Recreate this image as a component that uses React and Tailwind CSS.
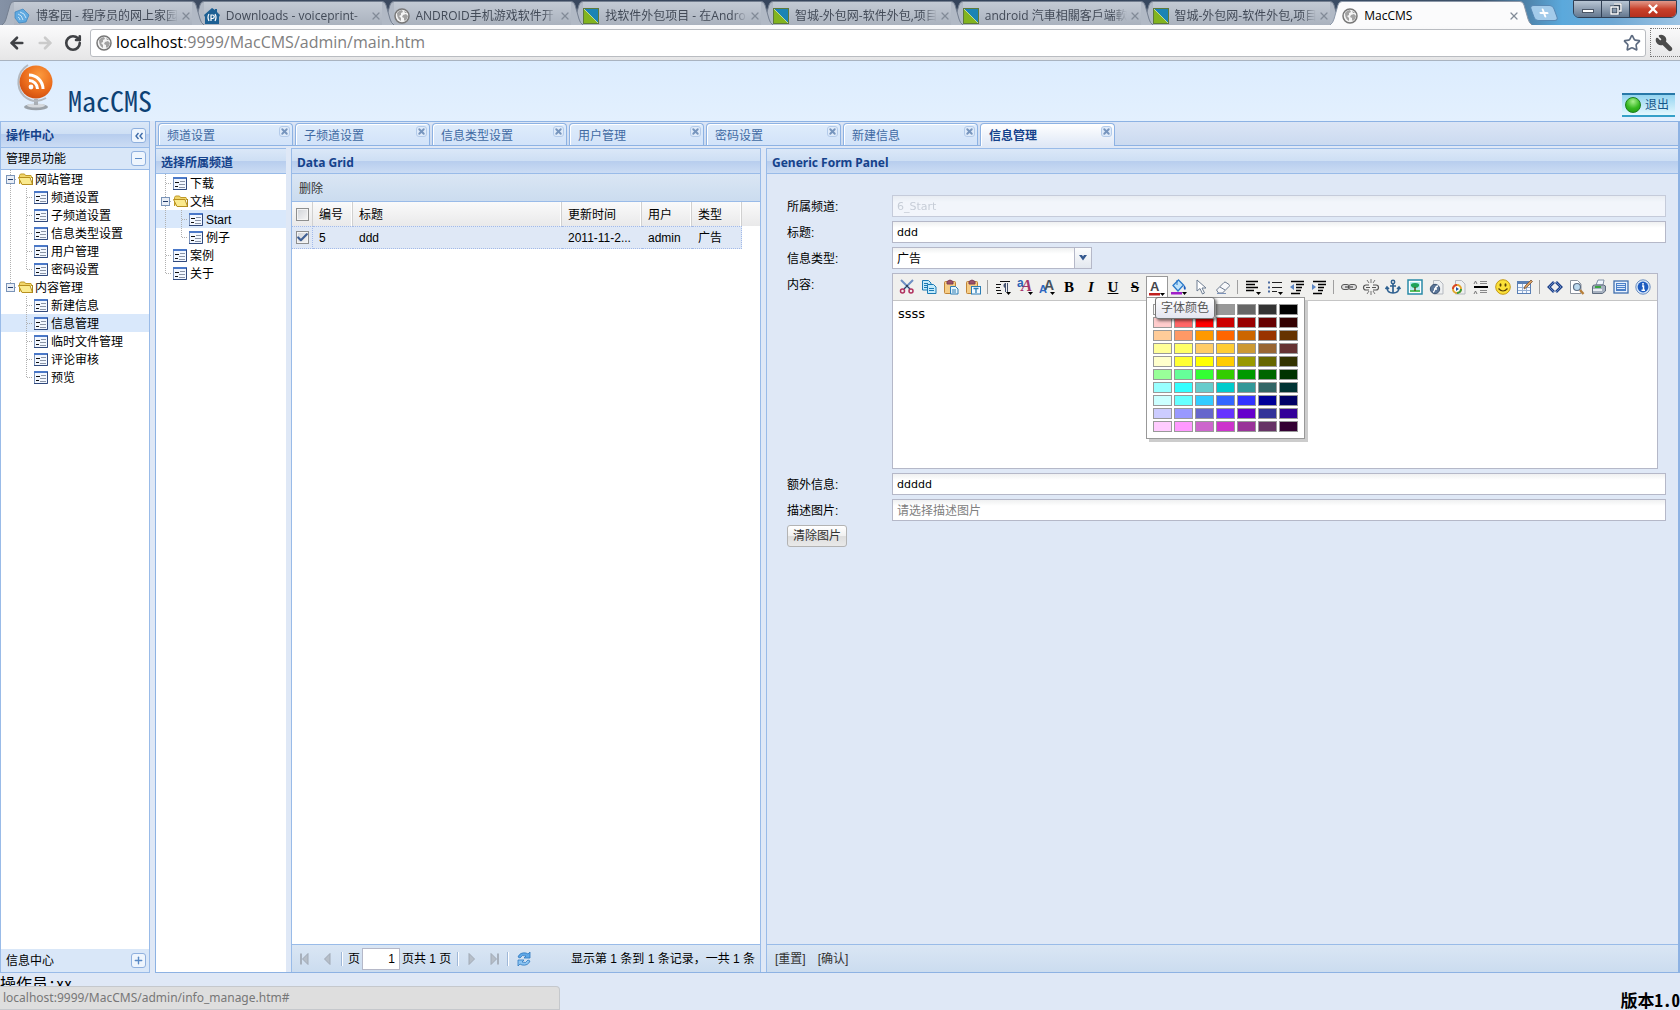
import React, { useState } from 'react';
import { ArrowLeft, ArrowRight, RotateCw, Star, Wrench, Check, X, Plus } from 'lucide-react';

const browserTabs = [
  { title: '博客园 - 程序员的网上家园', icon: 'cnblogs' },
  { title: 'Downloads - voiceprint-', icon: 'home' },
  { title: 'ANDROID手机游戏软件开', icon: 'globe' },
  { title: '找软件外包项目 - 在Andro', icon: 'zc' },
  { title: '智城-外包网-软件外包,项目', icon: 'zc' },
  { title: 'android 汽車相關客戶端軟', icon: 'zc' },
  { title: '智城-外包网-软件外包,项目', icon: 'zc' },
  { title: 'MacCMS', icon: 'globe', active: true },
];

const pageTabs = ['频道设置', '子频道设置', '信息类型设置', '用户管理', '密码设置', '新建信息', '信息管理'];

const adminTree = [
  { cells: ['minus'], icon: 'folder', text: '网站管理' },
  { cells: ['line', 'elbow'], text: '频道设置' },
  { cells: ['line', 'elbow'], text: '子频道设置' },
  { cells: ['line', 'elbow'], text: '信息类型设置' },
  { cells: ['line', 'elbow'], text: '用户管理' },
  { cells: ['line', 'end'], text: '密码设置' },
  { cells: ['minusEnd'], icon: 'folder', text: '内容管理' },
  { cells: ['blank', 'elbow'], text: '新建信息' },
  { cells: ['blank', 'elbow'], text: '信息管理' },
  { cells: ['blank', 'elbow'], text: '临时文件管理' },
  { cells: ['blank', 'elbow'], text: '评论审核' },
  { cells: ['blank', 'end'], text: '预览' },
];

const channelTree = [
  { cells: ['elbow'], text: '下载' },
  { cells: ['minus'], icon: 'folder', text: '文档' },
  { cells: ['line', 'elbow'], text: 'Start' },
  { cells: ['line', 'end'], text: '例子' },
  { cells: ['elbow'], text: '案例' },
  { cells: ['end'], text: '关于' },
];

const palette = [
  ['#ffffff', '#cccccc', '#c0c0c0', '#999999', '#666666', '#333333', '#000000'],
  ['#ffcccc', '#ff6666', '#ff0000', '#cc0000', '#990000', '#660000', '#330000'],
  ['#ffcc99', '#ff9966', '#ff9900', '#ff6600', '#cc6600', '#993300', '#663300'],
  ['#ffff99', '#ffff66', '#ffcc66', '#ffcc33', '#cc9933', '#996633', '#663333'],
  ['#ffffcc', '#ffff33', '#ffff00', '#ffcc00', '#999900', '#666600', '#333300'],
  ['#99ff99', '#66ff99', '#33ff33', '#33cc00', '#009900', '#006600', '#003300'],
  ['#99ffff', '#33ffff', '#66cccc', '#00cccc', '#339999', '#336666', '#003333'],
  ['#ccffff', '#66ffff', '#33ccff', '#3366ff', '#3333ff', '#000099', '#000066'],
  ['#ccccff', '#9999ff', '#6666cc', '#6633ff', '#6600cc', '#333399', '#330099'],
  ['#ffccff', '#ff99ff', '#cc66cc', '#cc33cc', '#993399', '#663366', '#330033'],
];

const Globe = () => (
  <svg viewBox="0 0 16 16" className="w-4 h-4 shrink-0">
    <circle cx="8" cy="8" r="7" fill="#f4f4f4" stroke="#777" strokeWidth="1.5" />
    <path d="M3 5q2-3 5-3l1 2-2 1 0 2-2 1 2 2 0 3q-4-2-4-8zM9 7l3-1 2 2-1 3-2 2-1-1 0-2-2-1zM10 3l2 1 1 1-2 0z" fill="#a2a2a2" />
  </svg>
);

const Favicon = ({ name }) => {
  if (name === 'globe') return <Globe />;
  if (name === 'zc') {
    return (
      <svg viewBox="0 0 16 16" className="w-4 h-4 shrink-0">
        <rect width="16" height="16" fill="#5d7a3a" />
        <path d="M1 1h14v14z" fill="#1b84b4" />
        <path d="M1 1v14h14z" fill="#82b41e" />
        <path d="M1 1l14 14" stroke="#d8e8b0" strokeWidth="0.8" />
      </svg>
    );
  }
  if (name === 'home') {
    return (
      <svg viewBox="0 0 16 16" className="w-4 h-4 shrink-0">
        <path d="M8 0l3 2V1h2v3l3 3-1 2v7H1V9L0 7z" fill="#1c5f93" />
        <path d="M5 6Q3 9 5 13M11 6Q13 9 11 13M7 13V7h1.500a1.500 1.500 0 0 1 0 3.500H7" stroke="#fff" fill="none" strokeWidth="1.200" />
      </svg>
    );
  }
  return (
    <svg viewBox="0 0 16 16" className="w-4 h-4 shrink-0">
      <path d="M1 4l8-3 6 6-3 7-7 1-4-5z" fill="#5fa9e0" stroke="#3a82bd" strokeWidth="0.7" />
      <path d="M4 6q4 1 5 6M6 4q5 1 6 6M4 9q2 1 2 3" stroke="#c9e4f8" fill="none" strokeWidth="1" />
    </svg>
  );
};

const BrowserTab = ({ tab, z }) => {
  const fill = tab.active ? '#fbfbfc' : '#b1b9c5';
  const line = tab.active ? '#8b97a8' : '#747f90';
  return (
    <div className="relative flex flex-1 min-w-0 h-6 -mr-3 last:mr-0" style={{ zIndex: z }}>
      <svg viewBox="0 0 12 24" className="w-3 h-6 shrink-0">
        <path d="M0 24Q3 22 4 18L8 4Q9 0.500 12 0.500V24z" fill={fill} />
        <path d="M0 24Q3 22 4 18L8 4Q9 0.500 12 0.500" fill="none" stroke={line} />
      </svg>
      <div className={`flex flex-1 min-w-0 items-center pt-1 border-t ${tab.active ? 'bg-[#fbfbfc] border-[#8b97a8]' : 'bg-linear-to-b from-[#c3cad4] to-[#aab2be] border-[#747f90]'}`}>
        <Favicon name={tab.icon} />
        <span className={`flex-1 min-w-0 ml-1.5 overflow-hidden whitespace-nowrap text-xs ${tab.active ? 'text-black' : 'text-[#424a57] mask-r-from-90%'}`}>{tab.title}</span>
        <button aria-label="关闭" className="ml-0.5 text-[#828b98]">
          <X className="w-3 h-3" strokeWidth={2.5} />
        </button>
      </div>
      <svg viewBox="0 0 12 24" className="w-3 h-6 shrink-0">
        <path d="M12 24Q9 22 8 18L4 4Q3 0.500 0 0.500V24z" fill={fill} />
        <path d="M12 24Q9 22 8 18L4 4Q3 0.500 0 0.500" fill="none" stroke={line} />
      </svg>
    </div>
  );
};

const treeLines = {
  line: 'M8.500 0V18',
  elbow: 'M8.500 0V18M9 9.500H15',
  end: 'M8.500 0V9M9 9.500H15',
  minus: 'M8.500 0V18M9 9.500H15',
  minusEnd: 'M8.500 0V9M9 9.500H15',
};

const TreeCell = ({ type }) => (
  <svg viewBox="0 0 16 18" className="w-4 h-[18px] shrink-0">
    {treeLines[type] && <path d={treeLines[type]} stroke="#b0b0b0" strokeDasharray="1 1" fill="none" />}
    {type.startsWith('minus') && (
      <>
        <rect x="4.500" y="5.500" width="8" height="8" fill="#e9eef6" stroke="#7a94b8" />
        <path d="M6 9.500h5" stroke="#203a68" />
      </>
    )}
  </svg>
);

const FolderIcon = () => (
  <svg viewBox="0 0 16 16" className="w-4 h-4 shrink-0">
    <path d="M1.500 13V4.500l1-1.500h4l1 1.500h5.500l.5 1V7" fill="#f0d56a" stroke="#c09a28" />
    <path d="M0.500 6.500h11.500l2.500 7H4z" fill="#faea8e" stroke="#b8901f" strokeLinejoin="round" />
    <path d="M14.500 6v8" stroke="#a8861c" />
  </svg>
);

const LeafIcon = () => (
  <svg viewBox="0 0 16 16" className="w-4 h-4 shrink-0">
    <path d="M0.500 2.500h13v12h-13z" fill="#f2f7ff" stroke="#7c93ba" />
    <path d="M0 3h14" stroke="#4a78c8" strokeWidth="2" />
    <path d="M13.500 3v11.500H0" stroke="#30497c" fill="none" />
    <path d="M2 7.500h4M2 11.500h3" stroke="#101010" />
    <path d="M7 6.500h5M6 9.500h6M6 12.500h6" stroke="#8a94a6" />
  </svg>
);

const Tree = ({ items, initial }) => {
  const [selected, setSelected] = useState(initial);
  return (
    <ul className="flex-1 bg-white text-xs">
      {items.map((item) => (
        <li
          key={item.text}
          onClick={() => setSelected(item.text)}
          className={`flex items-center h-[18px] pl-px whitespace-nowrap cursor-pointer ${selected === item.text ? 'bg-[#d9e8fb]' : ''}`}
        >
          {item.cells.map((cell, i) => <TreeCell key={i} type={cell} />)}
          {item.icon === 'folder' ? <FolderIcon /> : <LeafIcon />}
          <a href="#" className="pt-0.5 pl-px leading-4">{item.text}</a>
        </li>
      ))}
    </ul>
  );
};

const PanelTitle = ({ children }) => (
  <h2 className="flex items-center justify-between shrink-0 h-[25px] pt-[3px] px-[5px] border-b border-[#99bbe8] bg-[linear-gradient(#dbe8f8,#cedff4_48%,#b7cdee_50%,#cbdcf4)] text-xs font-bold text-[#15428b]">
    {children}
  </h2>
);

const ToolButton = ({ label, children }) => (
  <button type="button" aria-label={label} className="flex items-center justify-center w-[15px] h-[15px] border border-[#8fb0de] rounded-[3px] bg-[#eef5fd] text-[#3f6ca8]">
    {children}
  </button>
);

const Separator = () => <span className="w-px h-3.5 bg-[#9fb8d8] border-r border-white box-content" />;

const Svg = ({ children }) => <svg viewBox="0 0 16 16" className="w-4 h-4 overflow-visible">{children}</svg>;
const dropArrow = <path d="M11 13h5l-2.500 3z" fill="#000" />;
const serif = 'Liberation Serif, serif';

const editorTools = [
  ['剪切', <Svg><path d="M2 1l9 9M14 1L5 10" stroke="#6f8fc4" strokeWidth="2" /><path d="M7 6l4 4M9 6l-4 4" stroke="#345" /><circle cx="3.500" cy="12" r="2" fill="none" stroke="#b0305e" strokeWidth="1.500" /><circle cx="12" cy="12" r="2" fill="none" stroke="#b0305e" strokeWidth="1.500" /></Svg>],
  ['复制', <Svg><path d="M1.500 1.500h6l2.500 2.500v7h-8.500z" fill="#c4ebfb" stroke="#1c7bb4" /><path d="M3 4.500h4M3 6.500h4M3 8.500h3" stroke="#1c7bb4" /><path d="M6.500 5.500h6l2.500 2.500v6.500H6.500z" fill="#c4ebfb" stroke="#1c7bb4" /><path d="M8 9.500h5M8 11.500h5" stroke="#1c7bb4" /></Svg>],
  ['粘贴', <Svg><rect x="1.500" y="2.500" width="11" height="12" rx="1" fill="#f6cd86" stroke="#c08437" /><path d="M4 5V2.500q3-3 6 0V5z" fill="#9c5069" stroke="#7c3d55" /><path d="M7.500 7.500h5l2.500 2.500v5H7.500z" fill="#e4f5fd" stroke="#2c7db4" /><path d="M9 11h4M9 13h4" stroke="#2c7db4" /></Svg>],
  ['粘贴文本', <Svg><rect x="1.500" y="2.500" width="11" height="12" rx="1" fill="#f6cd86" stroke="#c08437" /><path d="M4 5V2.500q3-3 6 0V5z" fill="#9c5069" stroke="#7c3d55" /><rect x="6.500" y="7.500" width="9" height="7.500" fill="#f2faff" stroke="#2c7db4" /><path d="M8.500 9.500h5M11 9.500V14" stroke="#2c7db4" strokeWidth="1.300" /></Svg>],
  null,
  ['段落标签', <Svg><path d="M5 2.500h10M1 5.500h5M1 8.500h4M1 11.500h5M2 14.500h5" stroke="#111" /><path d="M12.500 4v9M10.500 4v9" stroke="#44516e" /><path d="M11 4a2.500 2.500 0 0 0 0 5z" fill="#44516e" />{dropArrow}</Svg>],
  ['字体', <Svg><text x="0" y="8" fontSize="12" fontWeight="bold" fill="#2c62b4" fontFamily="Liberation Sans, sans-serif">a</text><text x="4" y="12" fontSize="17" fontStyle="italic" fontWeight="bold" fill="#a3356a" fontFamily={serif}>A</text>{dropArrow}</Svg>],
  ['字体大小', <Svg><text x="5" y="11" fontSize="14" fontWeight="bold" fill="#46525f" fontFamily="Liberation Sans, sans-serif">A</text><text x="0" y="14" fontSize="11" fontWeight="bold" fill="#2c67c0" fontFamily="Liberation Sans, sans-serif">A</text>{dropArrow}</Svg>],
  ['加粗', <span className="font-bold">B</span>],
  ['斜体', <span className="font-bold italic">I</span>],
  ['下划线', <span className="font-bold underline">U</span>],
  ['删除线', <span className="font-bold line-through">S</span>],
  'color',
  ['背景颜色', <Svg><path d="M2 6.500L7.500 1l5 5-5.500 6z" fill="#bfe3fb" stroke="#2b79c9" strokeWidth="1.300" /><path d="M6 1v5" stroke="#2b79c9" /><path d="M13 6q3 3 1 5-2-1-1-5z" fill="#1c5fc0" /><rect x="0" y="13" width="11" height="2.500" fill="#a020c8" />{dropArrow}</Svg>],
  ['全选', <Svg><path d="M4 1v11l3-2.500L9.500 15l2-1L9 9h4z" fill="#fff" stroke="#6d7d92" /></Svg>],
  ['删除文字格式', <Svg><path d="M1.500 11L9 3.500q1-1 2 0l3 2q1 1 0 2L7.500 14h-4z" fill="#f7f8fa" stroke="#6d7b90" /><path d="M5 8l5 3" stroke="#6d7b90" /><path d="M2 14.500h9" stroke="#7d93b8" /></Svg>],
  null,
  ['对齐', <Svg><path d="M1 2.500h12M1 5.500h9M1 8.500h12M1 11.500h8" stroke="#000" strokeWidth="1.400" />{dropArrow}</Svg>],
  ['列表', <Svg><path d="M5 3.500h10M5 8.500h10M5 12.500h5" stroke="#222" /><path d="M1 3.500h2M1 8.500h2M1 12.500h2" stroke="#4a6aa0" strokeWidth="2" />{dropArrow}</Svg>],
  ['减少缩进', <Svg><path d="M2 2.500h13M7 5.500h8M7 8.500h6M7 11.500h5M2 14.500h9" stroke="#000" strokeWidth="1.400" /><path d="M5 5v6l-4-3z" fill="#5c86c4" /></Svg>],
  ['增加缩进', <Svg><path d="M2 2.500h13M7 5.500h8M7 8.500h6M7 11.500h5M2 14.500h9" stroke="#000" strokeWidth="1.400" /><path d="M1 5v6l4-3z" fill="#5c86c4" /></Svg>],
  null,
  ['超链接', <Svg><rect x="0.500" y="5.500" width="8" height="5" rx="2.500" fill="#ddd" stroke="#555" /><rect x="7.500" y="5.500" width="8" height="5" rx="2.500" fill="#ddd" stroke="#555" /><path d="M4 8h8" stroke="#333" /></Svg>],
  ['取消超链接', <Svg><path d="M6 6H3a2.500 2.500 0 0 0 0 5h3M10 6h3a2.500 2.500 0 0 1 0 5h-3M3 8.500h4M9 8.500h4" fill="none" stroke="#555" strokeWidth="1.200" /><path d="M8 0v4M4 1l2 3M12 1l-2 3M8 12v4M4 15l2-3M12 15l-2-3" stroke="#777" /></Svg>],
  ['锚点', <Svg><circle cx="8" cy="3" r="1.700" fill="none" stroke="#2f6190" strokeWidth="1.500" /><path d="M8 5v9M5 7h6" stroke="#2f6190" strokeWidth="1.700" /><path d="M2 8.500q0 5.500 6 5.500t6-5.500M.5 10L2 8l2 2M12 10l2-2 1.500 2" fill="none" stroke="#2f6190" strokeWidth="1.500" /></Svg>],
  ['图片', <Svg><rect x="1" y="1" width="14" height="14" fill="#fff" stroke="#2a8aa8" strokeWidth="1.500" /><rect x="3" y="3" width="10" height="10" fill="#b7ecf4" /><path d="M3 11h10v2H3z" fill="#55c060" /><path d="M4 7q-1-3 4-3t4 3q-1 2-4 2t-4-2z" fill="#1ea35a" /><path d="M8 8v4" stroke="#5a4a20" strokeWidth="1.500" /></Svg>],
  ['Flash动画', <Svg><path d="M4.500 1.500h6L14 5v10H4.500z" fill="#eef0f2" stroke="#b5b9bf" /><circle cx="6" cy="10" r="4.700" fill="#5a7598" stroke="#3b5270" /><path d="M4 13q1 0 2-3t3-3M5 10h3" stroke="#fff" fill="none" strokeWidth="1.300" /></Svg>],
  ['多媒体', <Svg><path d="M4.500 1.500h6L14 5v10H4.500z" fill="#eef0f2" stroke="#b5b9bf" /><circle cx="6" cy="10" r="4" fill="#fff" stroke="#e2a52c" strokeWidth="2" /><path d="M2 10a4 4 0 0 1 4-4" stroke="#d8432c" strokeWidth="2" fill="none" /><path d="M10 10a4 4 0 0 1-4 4" stroke="#3a9c3c" strokeWidth="2" fill="none" /><path d="M5 8v4l3-2z" fill="#2355a4" /></Svg>],
  ['分页符', <Svg><path d="M1 8h14" stroke="#000" strokeWidth="2" /><path d="M7 2.500h7M7 4.500h7M7 11.500h7M7 13.500h7" stroke="#888" /><path d="M1 5l1.500-3L4 5M1 15l1.500-3L4 15" stroke="#777" fill="none" /></Svg>],
  ['表情', <Svg><circle cx="8" cy="8" r="7.300" fill="#fbe038" stroke="#c49a14" /><ellipse cx="5.500" cy="6" rx="1" ry="1.700" fill="#5a4106" /><ellipse cx="10.500" cy="6" rx="1" ry="1.700" fill="#5a4106" /><path d="M3.500 9.500q4.500 5 9 0" fill="none" stroke="#5a4106" strokeWidth="1.200" /></Svg>],
  ['表格', <Svg><rect x="0.500" y="2.500" width="13" height="12" fill="#f5f9ff" stroke="#5a7fb4" /><path d="M1 4h12" stroke="#5a7fb4" strokeWidth="2" /><path d="M1 8.500h12M1 11.500h12M5.500 5v9M9.500 5v9" stroke="#94aed2" /><path d="M7 10l1-3 6-6 1.500 1.500-6 6z" fill="#d9a066" stroke="#7b5534" strokeWidth="0.800" /></Svg>],
  null,
  ['源代码', <Svg><path d="M7 3L2 8l5 5M9 3l5 5-5 5" fill="none" stroke="#1d3f86" strokeWidth="2.800" /><path d="M7 3L2 8l5 5M9 3l5 5-5 5" fill="none" stroke="#7fa3dc" strokeWidth="0.700" /></Svg>],
  ['预览', <Svg><path d="M1.500 1.500h7L12 5v9.500H1.500z" fill="#fff" stroke="#8d949e" /><circle cx="8" cy="8" r="3.500" fill="#bcd9ee" stroke="#5d6f85" strokeWidth="1.200" /><path d="M11 11l3.500 4" stroke="#b77f3a" strokeWidth="2.400" /></Svg>],
  ['打印', <Svg><path d="M5 6l2-5h6l-1 5z" fill="#f1f7ff" stroke="#8191a5" /><path d="M1.500 8q0-2 2-2h9l2 1v5l-3 2.500H1.500z" fill="#a6b1bf" stroke="#5e6c7e" /><path d="M2 11h9" stroke="#e8edf3" strokeWidth="2" /><path d="M4 8h6" stroke="#3aa63f" strokeWidth="2" /></Svg>],
  ['全屏编辑', <Svg><rect x="1" y="2" width="14" height="12" fill="#e7f1fd" stroke="#3f6fae" strokeWidth="1.300" /><rect x="3" y="4" width="10" height="8" fill="#4b80c8" /><path d="M4 5.500h8M4 7.500h8M4 9.500h8" stroke="#dbe9fa" /></Svg>],
  ['关于', <Svg><circle cx="8" cy="8" r="7.200" fill="#d7e6f8" stroke="#6c8fc0" /><circle cx="8" cy="8" r="5.400" fill="#1d5cc0" /><path d="M8 4v1.800M7 7h1.500v4M6.500 11.200h3.500" stroke="#fff" strokeWidth="1.500" fill="none" /></Svg>],
];

const ColorPicker = () => (
  <div className="relative z-10 w-[22px] h-[22px]">
    <button type="button" aria-label="字体颜色" className="flex items-center justify-center w-[22px] h-[22px] bg-white border border-b-0 border-[#999999]">
      <Svg>
        <text x="1" y="11" fontSize="13" fontWeight="bold" fill="#46464c" fontFamily="Liberation Sans, sans-serif">A</text>
        <rect x="0" y="13" width="11" height="2.500" fill="#c02020" />
        {dropArrow}
      </Svg>
    </button>
    <div className="absolute left-0 top-[21px] w-[159px] border border-[#999999] bg-white px-1.5 py-1.5 shadow-[3px_3px_0_#cccccc]">
      <div className="grid grid-cols-7 gap-0.5">
        {palette.flat().map((color) => (
          <button key={color} type="button" aria-label={color} className="h-[11px] border border-[#999999]" style={{ backgroundColor: color }} />
        ))}
      </div>
    </div>
    <div role="tooltip" className="absolute left-[9px] top-[21px] h-[22px] px-[5px] border border-[#767676] rounded-[3px] bg-linear-to-b from-white to-[#e4e5f0] text-xs leading-[21px] text-[#575757] whitespace-nowrap shadow-[2px_2px_3px_#00000080]">
      字体颜色
    </div>
  </div>
);

const inputClass = 'h-[22px] border border-[#b5b8c8] bg-linear-to-b from-[#eff0f1] to-white to-30% px-1 outline-none';
const latinInput = 'flex-1 text-[11px] font-["DejaVu_Sans","Noto_Sans_CJK_SC",sans-serif]';

const Field = ({ label, id, children }) => (
  <div className="flex items-start mb-1">
    <label htmlFor={id} className="w-[105px] shrink-0 pt-0.5 leading-5">{label}:</label>
    {children}
  </div>
);

const CheckBox = ({ label, checked }) => (
  <label className="relative flex w-[13px] h-[13px]">
    <input type="checkbox" aria-label={label} defaultChecked={checked} className="peer appearance-none w-[13px] h-[13px] border border-[#8e8f8f] bg-linear-to-br from-[#d0d3d8] to-[#f6f6f6] shadow-[inset_0_0_0_1px_#f4f4f4]" />
    <Check className="absolute inset-0 w-[13px] h-[13px] text-[#3f5f94] hidden peer-checked:block" strokeWidth={4} />
  </label>
);

const PageArrow = ({ label, flip, bar }) => (
  <button type="button" aria-label={label} className="flex items-center justify-center w-[22px] h-[22px]">
    <svg viewBox="0 0 16 16" className={`w-4 h-4 ${flip ? 'rotate-180' : ''}`}>
      {bar && <path d="M4 2.500v11" stroke="#a7b0bc" strokeWidth="2" />}
      <path d="M11 2.500v11L5.500 8z" fill="#b6bec8" stroke="#a1aab6" />
    </svg>
  </button>
);

const headCell = 'pt-0.5 pl-[6px] text-left font-normal border-r border-[#d0d0d0] shadow-[inset_-1px_0_0_#ffffff]';
const bodyCell = 'pl-[6px] border-y border-dotted border-[#a3bae9] bg-[#dfe8f6] overflow-hidden whitespace-nowrap';

const Browser = () => (
  <>
    <div className="flex shrink-0 h-[25px] pt-px pl-0.5 bg-[linear-gradient(90deg,#8592a6,#3c4a60_12%,#34435a_60%,#3d5068_88%,#5ba9dc_93%,#6fa8d4_96%,#9dc4e4)]">
      <div className="relative flex flex-1 min-w-0">
        {browserTabs.map((tab, i) => <BrowserTab key={i} tab={tab} z={tab.active ? 20 : 10 - i} />)}
      </div>
      <div className="flex items-start justify-between w-[148px] pr-[3px]">
        <button aria-label="新标签页" className="mt-1 w-6 h-4 skew-x-[20deg] flex items-center justify-center rounded-sm border border-[#5788b4] bg-[#a3cbea]">
          <Plus className="w-3 h-3 text-white" strokeWidth={4} />
        </button>
        <div className="flex h-[18px] -mt-px border border-[#303f54] rounded-b-md overflow-hidden">
          <button aria-label="最小化" className="w-7 flex items-center justify-center bg-linear-to-b from-[#b9c6d4] to-[#65788f] border-r border-[#303f54]">
            <span className="w-3 h-1 mt-1 bg-white border border-[#4b5666]" />
          </button>
          <button aria-label="还原" className="w-7 flex items-center justify-center bg-linear-to-b from-[#b9c6d4] to-[#65788f] border-r border-[#303f54]">
            <svg viewBox="0 0 12 12" className="w-3 h-3"><path d="M4 1h7v7H9M1 4h7v7H1z" fill="none" stroke="#384656" strokeWidth="3" /><path d="M4 1h7v7H9M1 4h7v7H1z" fill="none" stroke="#fff" strokeWidth="1.500" /></svg>
          </button>
          <button aria-label="关闭窗口" className="w-[46px] flex items-center justify-center bg-linear-to-b from-[#e0988a] via-[#c8402a] to-[#b5301f]">
            <X className="w-3.5 h-3.5 text-white" strokeWidth={4} />
          </button>
        </div>
      </div>
    </div>
    <div className="flex items-center shrink-0 h-9 pl-2 border-b border-[#a9b3c0] bg-linear-to-b from-[#fbfbfc] to-[#e6e6e7]">
      <button aria-label="后退"><ArrowLeft className="w-[18px] h-[18px] text-[#3f4145]" strokeWidth={3.5} /></button>
      <button aria-label="前进" className="ml-2.5"><ArrowRight className="w-[18px] h-[18px] text-[#cbcbcb]" strokeWidth={3.5} /></button>
      <button aria-label="刷新" className="ml-2.5"><RotateCw className="w-[18px] h-[18px] text-[#3f4145]" strokeWidth={3.5} /></button>
      <div className="flex flex-1 items-center h-7 ml-2 pl-[5px] pr-1 bg-white border border-[#b9bcc1] rounded-[3px]">
        <Globe />
        <a href="#" className="flex-1 ml-1 pb-px text-[16px] leading-6 text-[#808080]"><span className="text-black">localhost</span>:9999/MacCMS/admin/main.htm</a>
        <Star className="w-[18px] h-[18px] text-[#5d6b80]" strokeWidth={2.2} />
      </div>
      <button aria-label="设置" className="flex items-center justify-center w-[30px] h-[29px] ml-1 pr-1 border border-r-0 border-dotted border-[#777777]">
        <Wrench className="w-[18px] h-[18px] -scale-x-100 fill-[#4c4c4c] text-[#4c4c4c]" />
      </button>
    </div>
  </>
);

const App = () => {
  const [activeTab, setActiveTab] = useState('信息管理');

  return (
    <div className='flex flex-col h-screen overflow-hidden bg-[#dfe8f6] text-xs text-black font-["Liberation_Sans","Noto_Sans_CJK_SC",sans-serif]'>
      <div className='contents font-["Open_Sans","Noto_Sans_CJK_SC",sans-serif]'>
        <Browser />
      </div>

      {/* Site header */}
      <header className="flex items-end justify-between shrink-0 h-[60px] pl-4 pr-[5px] pb-1 bg-linear-to-b from-[#dcecfe] to-[#e3f0fe]">
        <div className="flex items-end h-full">
          <svg viewBox="0 0 38 48" className="w-[38px] h-12 mb-1.5">
            <defs>
              <radialGradient id="ball" cx="0.600" cy="0.300" r="0.800">
                <stop offset="0" stopColor="#fb9a3e" />
                <stop offset="0.600" stopColor="#ea6a1a" />
                <stop offset="1" stopColor="#c9470c" />
              </radialGradient>
            </defs>
            <ellipse cx="20" cy="44" rx="12" ry="3.200" fill="#9aa1a8" />
            <ellipse cx="20" cy="42.500" rx="9" ry="2" fill="#d5d9dd" />
            <path d="M18 36h4v6h-4z" fill="#a9afb5" />
            <path d="M12 2A20 20 0 0 0 8 33Q18 42 30 35" fill="none" stroke="#b3b8be" strokeWidth="2" />
            <circle cx="20" cy="19" r="16.500" fill="url(#ball)" />
            <circle cx="15" cy="24" r="2.400" fill="#fff" />
            <path d="M13 17.500a8.500 8.500 0 0 1 8.500 8.500M13 12a14 14 0 0 1 14 14" fill="none" stroke="#fff" strokeWidth="3" />
          </svg>
          <h1 className='ml-3.5 mb-[3px] text-[28px] leading-7 text-[#0d4174] font-["Noto_Sans_Mono_CJK_SC","Liberation_Mono",monospace]'>MacCMS</h1>
        </div>
        <button type="button" className="flex items-center h-6 w-[53px] pl-[3px] gap-1 border-t-2 border-b-2 border-t-[#2878a8] border-b-[#35a0c8] bg-linear-to-b from-[#94d4f0] to-[#e4f8fe] text-[#14568a] whitespace-nowrap">
          <span className="w-4 h-4 shrink-0 rounded-full border border-[#1c7f1c] bg-[radial-gradient(circle_at_50%_25%,#a6f08c,#35b91f_55%,#1f9413)]" />
          退出
        </button>
      </header>

      <div className="flex flex-1 min-h-0 gap-[5px]">
        {/* Left navigation */}
        <aside className="flex flex-col shrink-0 w-[150px] border border-[#99bbe8]">
          <h2 className="flex items-center justify-between shrink-0 h-[26px] pt-0.5 pl-[5px] pr-[3px] border-b border-[#99bbe8] bg-[linear-gradient(#dbe8f8,#cedff4_48%,#b7cdee_50%,#cbdcf4)] text-xs font-bold text-[#15428b]">
            操作中心
            <ToolButton label="收起">
              <svg viewBox="0 0 10 10" className="w-2.5 h-2.5"><path d="M4.500 2L2 5l2.500 3M8.500 2L6 5l2.500 3" fill="none" stroke="currentColor" strokeWidth="1.400" /></svg>
            </ToolButton>
          </h2>
          <h3 className="flex items-center justify-between shrink-0 h-[22px] pl-[5px] pr-[3px] border-b border-[#99bbe8] bg-[#d9e7f8]">
            管理员功能
            <ToolButton label="折叠"><span className="w-[7px] h-px bg-[#5a8ac6]" /></ToolButton>
          </h3>
          <Tree items={adminTree} initial="信息管理" />
          <h3 className="flex items-center justify-between shrink-0 h-[23px] pl-[5px] pr-[3px] bg-[#d9e7f8]">
            信息中心
            <ToolButton label="展开"><Plus className="w-[11px] h-[11px] text-[#5a8ac6]" strokeWidth={3} /></ToolButton>
          </h3>
        </aside>

        <main className="flex flex-col flex-1 min-w-0 border border-r-2 border-[#8db2e3]">
          <nav className="flex items-end shrink-0 gap-0.5 h-6 pl-0.5 border-b border-[#8db2e3] bg-linear-to-b from-[#dbe5f5] to-[#cbdaf0]">
            {pageTabs.map((name) => {
              const active = name === activeTab;
              return (
                <div
                  key={name}
                  className={`flex items-start justify-between w-[135px] border border-b-0 border-[#8db2e3] rounded-t-[4px] shadow-[inset_1px_1px_0_#ffffff] ${active ? 'h-[23px] -mb-px bg-linear-to-b from-white to-[#dfe8f6]' : 'h-[22px] bg-linear-to-b from-[#dfecfb] to-[#d2e3f9]'}`}
                >
                  <button
                    type="button"
                    onClick={() => setActiveTab(name)}
                    className={`pl-2 leading-6 text-xs ${active ? 'font-bold text-[#15428b]' : 'text-[#416aa3]'}`}
                  >
                    {name}
                  </button>
                  <button type="button" aria-label={`关闭${name}`} className="flex items-center justify-center w-[11px] h-[11px] mt-0.5 mr-0.5 border border-[#b4cbea] rounded-[3px] bg-[#dfebfa] text-[#7795bd]">
                    <X className="w-[9px] h-[9px]" strokeWidth={5} />
                  </button>
                </div>
              );
            })}
          </nav>

          <div className="flex flex-1 min-h-0 gap-[5px] pt-0.5">
            {/* Channel picker */}
            <section className="flex flex-col w-[130px] border-t border-[#99bbe8]">
              <PanelTitle>选择所属频道</PanelTitle>
              <Tree items={channelTree} initial="Start" />
            </section>

            {/* Article grid */}
            <section className="flex flex-col w-[470px] border border-b-0 border-[#99bbe8] bg-white">
              <PanelTitle><span className='font-["Noto_Sans",sans-serif]'>Data Grid</span></PanelTitle>
              <div className="flex items-center shrink-0 h-7 pt-0.5 pl-[7px] border-b border-[#99bbe8] bg-linear-to-b from-[#dae6f4] to-[#cbdcef]">
                <button type="button" className="text-[#333333]">删除</button>
              </div>
              <div className="flex-1">
                <table className="w-full table-fixed border-separate border-spacing-0">
                  <colgroup>
                    <col className="w-[21px]" />
                    <col className="w-10" />
                    <col className="w-[209px]" />
                    <col className="w-20" />
                    <col className="w-[50px]" />
                    <col className="w-[50px]" />
                    <col />
                  </colgroup>
                  <thead>
                    <tr className="h-6 bg-linear-to-b from-[#fafafa] to-[#e9e9ea]">
                      <th className="pl-1 border-r border-[#d0d0d0]"><CheckBox label="全选" /></th>
                      <th className={headCell}>编号</th>
                      <th className={headCell}>标题</th>
                      <th className={headCell}>更新时间</th>
                      <th className={headCell}>用户</th>
                      <th className={headCell}>类型</th>
                      <th />
                    </tr>
                  </thead>
                  <tbody>
                    <tr className="h-[23px]">
                      <td className="pl-1 border-y border-r border-dotted border-[#a3bae9] bg-[#dfe8f6]"><CheckBox label="选择" checked /></td>
                      <td className={bodyCell}>5</td>
                      <td className={bodyCell}>ddd</td>
                      <td className={bodyCell}>2011-11-2...</td>
                      <td className={bodyCell}>admin</td>
                      <td className={`${bodyCell} border-r`}>广告</td>
                      <td />
                    </tr>
                  </tbody>
                </table>
              </div>
              <div className="flex items-center shrink-0 h-7 pl-0.5 pr-[5px] border-t border-[#99bbe8] bg-linear-to-b from-[#dae6f4] to-[#cbdcef]">
                <PageArrow label="首页" bar />
                <PageArrow label="上一页" />
                <span className="w-[3px]" />
                <Separator />
                <label htmlFor="page" className="ml-[5px]">页</label>
                <input id="page" defaultValue="1" className="w-[38px] h-[22px] mx-0.5 pr-1 border border-[#b5b8c8] bg-white text-right outline-none" />
                <span>页共 1 页</span>
                <span className="w-1.5" />
                <Separator />
                <span className="w-0.5" />
                <PageArrow label="下一页" flip />
                <PageArrow label="末页" flip bar />
                <span className="w-0.5" />
                <Separator />
                <button type="button" aria-label="刷新" className="flex items-center justify-center w-[22px] h-[22px] ml-1">
                  <Svg>
                    <path d="M2 6q2-5 8-4l2 1 2-2v6H8l2-2q-4-2-6 2z" fill="#5fa8e8" stroke="#2f78bf" strokeWidth="0.800" />
                    <path d="M14 10q-2 5-8 4l-2-1-2 2V9h6l-2 2q4 2 6-2z" fill="#8cc4f2" stroke="#2f78bf" strokeWidth="0.800" />
                  </Svg>
                </button>
                <span className="ml-auto whitespace-nowrap">显示第 1 条到 1 条记录，一共 1 条</span>
              </div>
            </section>

            {/* Edit form */}
            <section className="flex flex-col flex-1 min-w-0 border-l border-t border-[#99bbe8]">
              <PanelTitle><span className='font-["Noto_Sans",sans-serif]'>Generic Form Panel</span></PanelTitle>
              <form className="flex-1 pt-[21px] pl-5 pr-3" onSubmit={(e) => e.preventDefault()}>
                <Field label="所属频道" id="channel">
                  <input id="channel" disabled defaultValue="6_Start" className={`${inputClass} ${latinInput} opacity-60 text-[#b8bcc4]`} />
                </Field>
                <Field label="标题" id="title">
                  <input id="title" defaultValue="ddd" className={`${inputClass} ${latinInput}`} />
                </Field>
                <Field label="信息类型" id="type">
                  <div className="relative w-[200px] h-[22px]">
                    <select id="type" className={`${inputClass} w-full pt-0.5 appearance-none`}>
                      <option>广告</option>
                    </select>
                    <span className="absolute right-0 top-0 flex items-center justify-center w-[18px] h-[22px] border border-[#b5b8c8] bg-linear-to-b from-[#fbfcfd] to-[#e3e8ef] pointer-events-none">
                      <svg viewBox="0 0 10 8" className="w-2.5 h-2"><path d="M1 1h3l1 1.500L6 1h3L5 6.500z" fill="#34588f" /></svg>
                    </span>
                  </div>
                </Field>
                <Field label="内容" id="content">
                  <div className="flex flex-col flex-1 min-w-0 h-[196px] mr-2 border border-[#b5b8c8] bg-white">
                    <div className="flex shrink-0 h-[27px] pt-0.5 pl-[3px] border-b border-[#c5c5c5] bg-[#f0f0ee]">
                      {editorTools.map((tool, i) => {
                        if (tool === null) return <span key={i} className="w-px h-3.5 mt-1 ml-[3px] mr-1 bg-[#a0a0a0]" />;
                        if (tool === 'color') return <ColorPicker key={i} />;
                        return (
                          <button key={i} type="button" aria-label={tool[0]} className='flex items-center justify-center shrink-0 w-[22px] h-[22px] text-[15px] leading-4 font-["Liberation_Serif",serif]'>
                            {tool[1]}
                          </button>
                        );
                      })}
                    </div>
                    <textarea id="content" defaultValue="ssss" className='flex-1 p-[5px] text-[13px] leading-4 resize-none outline-none font-["DejaVu_Sans",sans-serif]' />
                  </div>
                </Field>
                <Field label="额外信息" id="extra">
                  <input id="extra" defaultValue="ddddd" className={`${inputClass} ${latinInput}`} />
                </Field>
                <Field label="描述图片" id="image">
                  <input id="image" placeholder="请选择描述图片" className={`${inputClass} flex-1 pt-0.5 placeholder:text-[#808080]`} />
                </Field>
                <button type="button" className="h-[22px] w-[60px] border border-[#b3b3b3] rounded-[3px] bg-[linear-gradient(#ffffff,#f0f0f0_50%,#dedede_52%,#e9e9e9)] text-[#333333] whitespace-nowrap">清除图片</button>
              </form>
              <div className="flex items-center shrink-0 gap-3 h-7 pl-2 border-t border-[#99bbe8] bg-linear-to-b from-[#dae6f4] to-[#cbdcef] text-[#333333]">
                <button type="button">[重置]</button>
                <button type="button">[确认]</button>
              </div>
            </section>
          </div>
        </main>
      </div>

      <footer className='relative flex items-start justify-between shrink-0 h-[37px] text-[16px] leading-5 font-["Noto_Sans_Mono_CJK_SC","Liberation_Mono","Noto_Sans_CJK_SC",monospace]'>
        <span>操作员:xx</span>
        <span className="self-end text-[17px] font-bold">版本1.0</span>
        <div className='absolute left-0 bottom-0 w-1/3 h-6 px-[3px] border border-l-0 border-[#c5c8cc] rounded-tr bg-[#dedede] text-xs leading-[22px] text-[#777777] font-["Noto_Sans",sans-serif]'>
          localhost:9999/MacCMS/admin/info_manage.htm#
        </div>
      </footer>
    </div>
  );
};

export default App;
